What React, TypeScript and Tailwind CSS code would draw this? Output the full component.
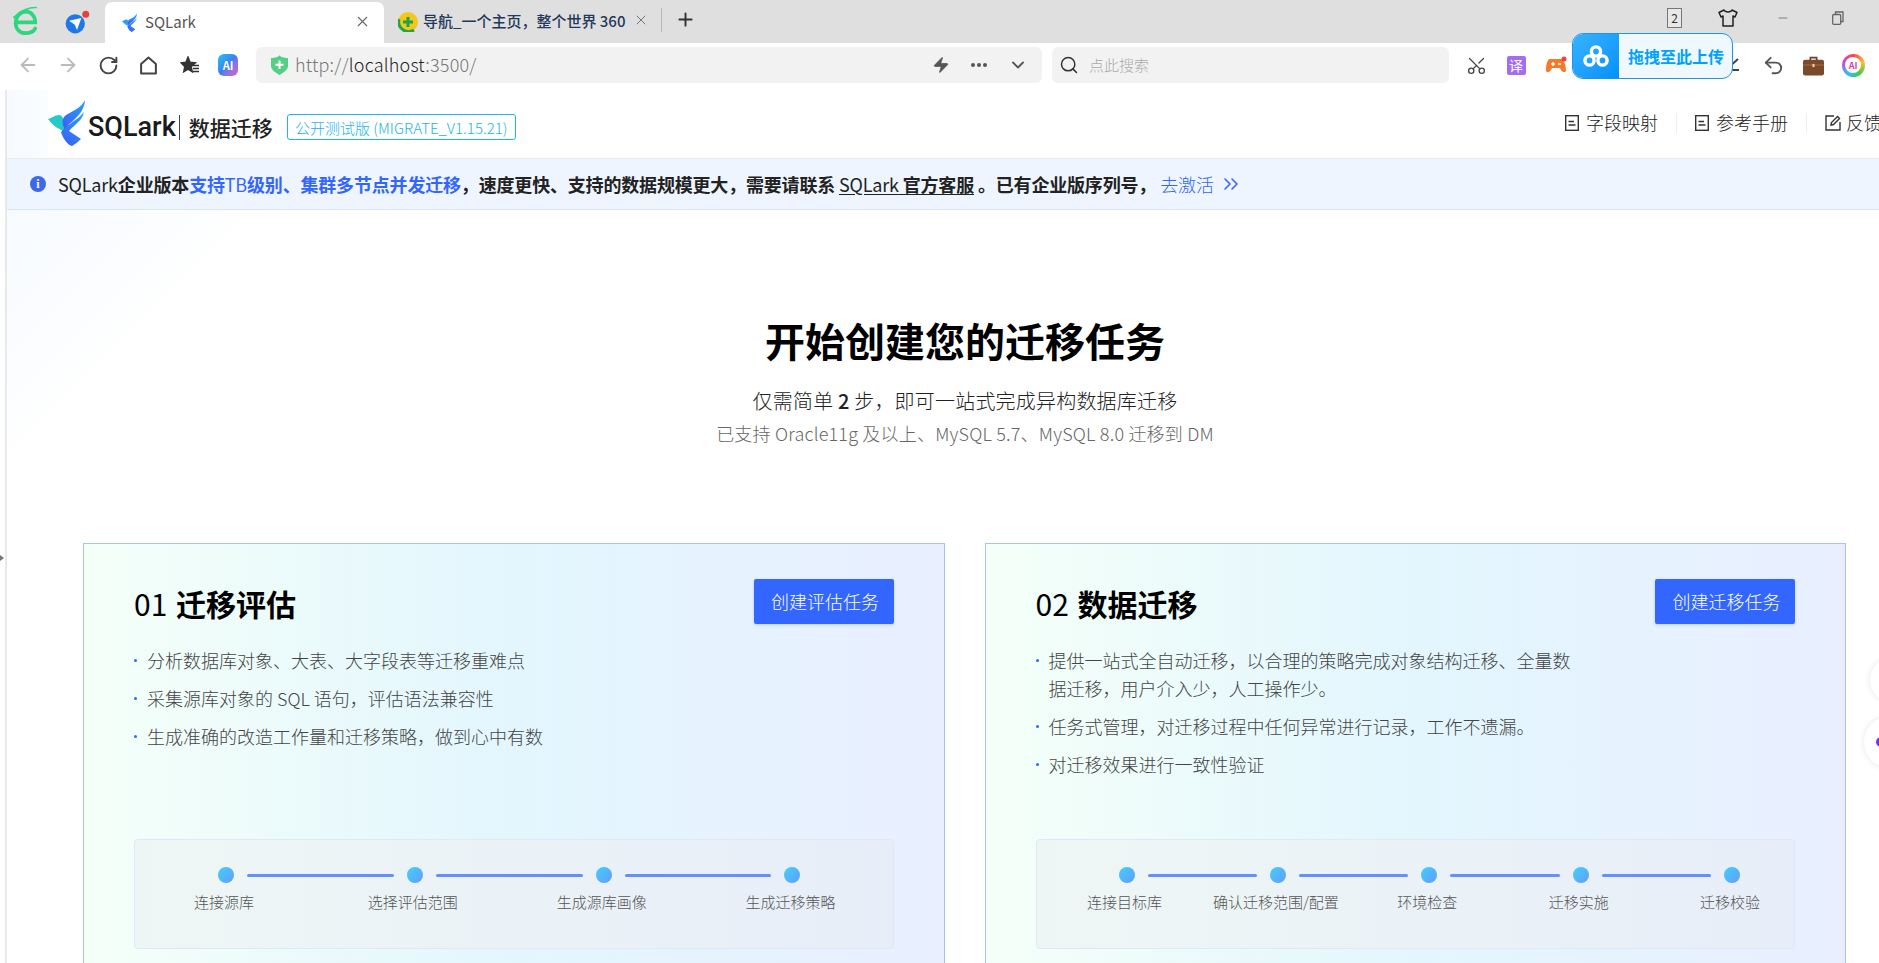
import React from "react";
import { ArrowLeft, ArrowRight, RotateCw, Scissors, Undo2, Search, ChevronDown, ChevronsRight, X, Plus, Minus, Zap } from "lucide-react";

function Bird({ className = "", teal = true }: { className?: string; teal?: boolean }) {
  const id = teal ? "birdA" : "birdB";
  return (
    <svg viewBox="0 0 37 47" className={className}>
      <defs>
        <linearGradient id={id} x1="0.8" y1="0" x2="0.3" y2="1">
          <stop offset="0" stopColor="#2a9dff" />
          <stop offset="1" stopColor="#3a63f5" />
        </linearGradient>
      </defs>
      <path d="M0 20 C4 19 7 16 11 16 C14 16 15 19 16 22 L18 33 C12 31 5 27 0 20 Z" fill={teal ? "#25c9c9" : "#2a9dff"} />
      <path d="M37 1 C37 11 28 20 21 25 L17 31 C14 25 13 20 18 16 C25 12 33 9 37 1 Z" fill={`url(#${id})`} />
      <path d="M36 13 C35 21 26 26 21 32 L33 40 C30 43 27 45 24 47 C20 46 15 40 13 33 C19 25 30 21 36 13 Z" fill={`url(#${id})`} />
    </svg>
  );
}

function DocIcon() {
  return (
    <svg viewBox="0 0 14 16" className="h-[16px] w-[14px] shrink-0" fill="none" stroke="#333" strokeWidth="1.4">
      <rect x="0.7" y="0.7" width="12.6" height="14.6" />
      <path d="M3.5 6.5H9M3.5 10H10.5" />
    </svg>
  );
}

function Tool({ children }: { children: React.ReactNode }) {
  return <div className="flex h-10 w-10 shrink-0 items-center justify-center">{children}</div>;
}

function TabBar() {
  return (
    <div className="flex h-[43px] items-end bg-[#dfdfdf]">
      <div className="flex h-[43px] w-[105px] shrink-0 items-center">
        <svg viewBox="0 0 30 34" className="ml-[11px] h-[32px] w-[28px]" fill="none" stroke="#2ed67f" strokeWidth="4" strokeLinecap="round">
          <path d="M5 17.5H26C26 10 21 6 16 6C9 6 5 12 5 18C5 25 10 29 16 29C20 29 24 27.5 26 24" />
          <path d="M3 12C10 5 20 1 27 1.5" strokeWidth="1.8" />
        </svg>
        <svg viewBox="0 0 32 32" className="ml-[24px] h-[28px] w-[28px]">
          <circle cx="14" cy="18" r="11" fill="#1f77e8" />
          <path d="M7 14.5L21 11.5L16 25L13.5 19Z" fill="#fff" />
          <circle cx="26" cy="7" r="4" fill="#e0453c" />
        </svg>
      </div>
      <div className="flex h-[41px] w-[279px] shrink-0 items-center rounded-t-[7px] bg-white">
        <Bird teal={false} className="ml-[17px] h-[19px] w-[15px]" />
        <span className="ml-[8px] text-[15px] text-[#555]">SQLark</span>
        <X className="ml-auto mr-[13px] mb-[3px] h-[17px] w-[17px] text-[#666]" strokeWidth={1.5} />
      </div>
      <div className="flex h-[43px] flex-1 items-center">
        <svg viewBox="0 0 20 20" className="ml-[14px] h-[20px] w-[20px] shrink-0">
          <circle cx="10" cy="10" r="10" fill="#f3c71c" />
          <path d="M1 7A10 10 0 0 0 16 18" stroke="#22a347" strokeWidth="3" fill="none" />
          <path d="M10 5V15M5 10H15" stroke="#1ea34a" strokeWidth="3" />
        </svg>
        <span className="ml-[5px] whitespace-nowrap text-[15px] font-medium text-[#23395b]">导航_一个主页，整个世界 360</span>
        <X className="ml-[8px] mb-[4px] h-[16px] w-[16px] text-[#777]" strokeWidth={1.5} />
        <div className="ml-[12px] mb-[4px] h-[24px] w-px bg-[#b8b8b8]" />
        <Plus className="ml-[13px] mb-[4px] h-[21px] w-[21px] text-[#333]" strokeWidth={2.2} />
        <div className="ml-auto flex items-center pb-[8px]">
          <div className="mr-[36px] flex h-[20px] w-[15px] items-center justify-center border border-[#777] bg-[#e8e8e8] text-[12px] leading-none text-[#333]">2</div>
          <svg viewBox="0 0 20 18" className="mr-[38px] h-[18px] w-[20px]" fill="none" stroke="#222" strokeWidth="1.5" strokeLinejoin="round">
            <path d="M6 1L1 3.5L3 8L5 7V17H15V7L17 8L19 3.5L14 1C13 3.5 7 3.5 6 1Z" />
          </svg>
          <Minus className="mr-[42px] h-[14px] w-[14px] text-[#666]" strokeWidth={1.3} />
          <svg viewBox="0 0 12 14" className="mr-[35px] h-[14px] w-[12px]" fill="none" stroke="#666" strokeWidth="1.3">
            <rect x="0.7" y="3.5" width="8" height="9.8" rx="1" />
            <path d="M3.5 3.5V1H11V10.5H8.7" />
          </svg>
        </div>
      </div>
    </div>
  );
}

function ToolBar() {
  return (
    <div className="flex h-[47px] items-center bg-white pb-[3px] pl-[8px] pr-[6px]">
      <Tool><ArrowLeft className="h-[22px] w-[22px] text-[#bbb]" strokeWidth={2} /></Tool>
      <Tool><ArrowRight className="h-[22px] w-[22px] text-[#bbb]" strokeWidth={2} /></Tool>
      <Tool><RotateCw className="ml-[1px] h-[21px] w-[21px] text-[#444]" strokeWidth={2.2} /></Tool>
      <Tool>
        <svg viewBox="0 0 18 18" className="h-[19px] w-[19px]" fill="none" stroke="#444" strokeWidth="1.9" strokeLinejoin="round">
          <path d="M2 7.5L9 1.5L16 7.5V16.5H2Z" />
        </svg>
      </Tool>
      <Tool>
        <svg viewBox="0 0 20 18" className="ml-[3px] h-[18px] w-[20px]" fill="none" stroke="#333" strokeWidth="1.8">
          <path d="M8 1.5L10 6.5L15 7L11 10.5L12 15.5L8 13L4 15.5L5 10.5L1.5 7L6 6.5Z" fill="#333" />
          <path d="M13 9.5H19M13 12.5H19M12.5 15.5H19" strokeWidth="1.5" />
        </svg>
      </Tool>
      <Tool>
        <div className="flex h-[22px] w-[20px] items-center justify-center rounded-[6px] bg-gradient-to-br from-[#12c6ee] via-[#3f7cf2] to-[#e44ec3] text-[11px] font-semibold leading-none text-white">AI</div>
      </Tool>
      <div className="ml-[8px] flex h-[36px] w-[786px] shrink-0 items-center rounded-[6px] bg-[#f2f2f2]">
        <svg viewBox="0 0 17 20" className="ml-[15px] h-[20px] w-[17px]">
          <path d="M0 3C4 3 8 2 8.5 0C9 2 13 3 17 3V11C17 15 12 18 8.5 20C5 18 0 15 0 11Z" fill="#55cf86" />
          <path d="M8.5 5.5V14M4.5 9.8H12.5" stroke="#fff" strokeWidth="2" />
        </svg>
        <span className="mb-[1px] ml-[7px] text-[18px] font-light tracking-[0.2px] text-[#777]">http://<span className="text-[#222]">localhost</span>:3500/</span>
        <Zap className="ml-auto h-[22px] w-[18px] fill-[#555] text-[#555]" strokeWidth={1} />
        <div className="ml-[21px] flex gap-[2px]">
          <i className="h-[4px] w-[4px] rounded-full bg-[#555]" />
          <i className="h-[4px] w-[4px] rounded-full bg-[#555]" />
          <i className="h-[4px] w-[4px] rounded-full bg-[#555]" />
        </div>
        <ChevronDown className="ml-[21px] mr-[14px] h-[20px] w-[20px] text-[#555]" strokeWidth={2.2} />
      </div>
      <div className="ml-[10px] flex h-[36px] w-[397px] shrink-0 items-center rounded-[6px] bg-[#f2f2f2]">
        <Search className="ml-[7px] h-[20px] w-[20px] text-[#333]" strokeWidth={1.8} />
        <span className="ml-[10px] text-[15px] font-light text-[#aaa]">点此搜索</span>
      </div>
      <div className="ml-[7px] flex flex-1 items-center">
        <Tool><Scissors className="h-[21px] w-[21px] -rotate-90 text-[#444]" strokeWidth={1.5} /></Tool>
        <Tool>
          <div className="flex h-[19px] w-[19px] items-center justify-center rounded-[2px] bg-[#a46cf5] text-[14px] leading-none text-white">译</div>
        </Tool>
        <Tool>
          <svg viewBox="0 0 22 18" className="h-[18px] w-[22px]">
            <path d="M5 3H16C19 3 21 10 21 14C21 17 18 17 16 14L15 12H7L6 14C4 17 1 17 1 14C1 10 2 3 5 3Z" fill="#f77a2c" />
            <path d="M6 8H10M8 6V10M13 8H16" stroke="#fff" strokeWidth="1.4" />
            <circle cx="19" cy="3" r="2.5" fill="#ef4040" />
          </svg>
        </Tool>
        <div className="ml-auto flex items-center">
          <Tool>
            <svg viewBox="0 0 18 18" className="h-[18px] w-[18px]" fill="none" stroke="#444" strokeWidth="2">
              <path d="M3 14H15M4 12L14 3" />
            </svg>
          </Tool>
          <Tool><Undo2 className="h-[23px] w-[23px] text-[#555]" strokeWidth={2} /></Tool>
          <Tool>
            <svg viewBox="0 0 20 20" className="h-[21px] w-[21px]">
              <path d="M7 5V2.5H13V5" fill="none" stroke="#6d4227" strokeWidth="1.6" />
              <rect x="0" y="4.5" width="20" height="15" rx="2" fill="#7b4a2c" />
              <rect x="0" y="9" width="20" height="1" fill="#a06a43" />
              <rect x="9" y="8.5" width="2" height="3" fill="#f4d38a" />
            </svg>
          </Tool>
          <Tool>
            <div className="flex h-[23px] w-[23px] items-center justify-center rounded-full bg-[conic-gradient(#f44,#fb3,#4c4,#3bf,#c4e,#f44)]">
              <div className="flex h-[16px] w-[16px] items-center justify-center rounded-full bg-white text-[9px] font-semibold leading-none text-[#d0479c]">AI</div>
            </div>
          </Tool>
        </div>
      </div>
    </div>
  );
}

function Header() {
  return (
    <div className="flex h-[68px] w-[1875px] shrink-0 items-center justify-between bg-[linear-gradient(90deg,#f6faff_0px,#fbfdff_41px,#ffffff_41px)] pb-[3px] pl-[41px]">
      <div className="flex items-center">
        <Bird className="h-[47px] w-[37px]" />
        <span className="ml-[3px] mt-[10px] font-['Roboto',sans-serif] text-[27px] font-medium leading-none text-[#1a1a1a]">SQLark</span>
        <div className="ml-[3px] mt-[9px] h-[25px] w-px bg-[#444]" />
        <span className="ml-[9px] mt-[10px] whitespace-nowrap text-[21px] font-medium leading-none text-[#222]">数据迁移</span>
        <div className="ml-[14px] mt-[9px] flex h-[26px] w-[229px] items-center justify-center whitespace-nowrap rounded-[3px] border border-[#1bb5ea] text-[15px] font-light leading-none text-[#1bb5ea]">公开测试版 (MIGRATE_V1.15.21)</div>
      </div>
      <div className="flex items-center">
        <DocIcon />
        <span className="ml-[7px] whitespace-nowrap text-[18px] font-light text-[#222]">字段映射</span>
        <div className="mx-[18px] h-[20px] w-px bg-[#eee]" />
        <DocIcon />
        <span className="ml-[7px] whitespace-nowrap text-[18px] font-light text-[#222]">参考手册</span>
        <div className="mx-[18px] h-[20px] w-px bg-[#eee]" />
        <svg viewBox="0 0 16 16" className="h-[16px] w-[16px] shrink-0" fill="none" stroke="#333" strokeWidth="1.4">
          <path d="M9 1H1V15H15V7" />
          <path d="M6 10L6.5 7.5L12.5 1.5L14.5 3.5L8.5 9.5Z" />
        </svg>
        <span className="ml-[5px] whitespace-nowrap text-[18px] font-light text-[#222]">反馈</span>
      </div>
    </div>
  );
}

function Banner() {
  return (
    <div className="flex h-[52px] shrink-0 items-center border-y border-b-[#d9e6fa] border-t-[#e9e9e9] bg-[#eef5fe] pl-[23px] text-[18px]">
      <div className="flex h-[16px] w-[16px] items-center justify-center rounded-full bg-[#3f67ea] font-['Liberation_Serif',serif] text-[12px] font-bold leading-none text-white">i</div>
      <span className="ml-[12px] whitespace-nowrap font-semibold tracking-[-0.18px] text-[#222]">
        <span className="font-normal">SQLark</span>企业版本<span className="text-[#3366ff]">支持<span className="font-normal">TB</span>级别、集群多节点并发迁移</span>，速度更快、支持的数据规模更大，需要请联系 <span className="underline underline-offset-2"><span className="font-normal">SQLark</span> 官方客服</span> 。已有企业版序列号，
      </span>
      <span className="ml-[4px] whitespace-nowrap font-light text-[#3366ff]">去激活</span>
      <ChevronsRight className="ml-[5px] h-[24px] w-[24px] text-[#3366ff]" strokeWidth={1.6} />
    </div>
  );
}

function Steps({ items, pad }: { items: string[]; pad: string }) {
  return (
    <div className={`h-[110px] rounded-[4px] border border-[#dfe8f6] bg-gradient-to-r from-[#eef6f5] to-[#e7eef9] pt-[27px] ${pad}`}>
      <div className="flex items-center">
        {items.map((t, i) => (
          <React.Fragment key={t}>
            <div className="h-[16px] w-[16px] shrink-0 rounded-full bg-gradient-to-br from-[#3fd0f8] to-[#5f9bfb]" />
            {i < items.length - 1 && <div className="mx-[13px] h-[3px] flex-1 rounded-full bg-[#648ffc]" />}
          </React.Fragment>
        ))}
      </div>
      <div className="mt-[8px] flex justify-between">
        {items.map((t) => (
          <div key={t} className="flex w-[16px] justify-center whitespace-nowrap text-[15px] font-light leading-[22px] text-[#555]">
            <span className="-translate-x-[2px]">{t}</span>
          </div>
        ))}
      </div>
    </div>
  );
}

function Card({ no, title, btn, list, steps, pad }: { no: string; title: string; btn: string; list: string[]; steps: string[]; pad: string }) {
  return (
    <div className="flex h-[500px] w-[861.5px] shrink-0 flex-col border border-[#a9c1fb] bg-gradient-to-r from-[#f4fff8] via-[#e3f6fe] to-[#e9efff] px-[50px] pt-[35px]">
      <div className="flex items-start justify-between">
        <div className="mt-[3px] text-[30px] leading-[42px] text-black">
          {no} <span className="ml-[2px] font-bold">{title}</span>
        </div>
        <div className="flex h-[45px] w-[140px] items-center justify-center rounded-[2px] bg-[#3366ff] pb-[1px] pl-[3px] text-[18px] font-light text-white shadow-[0_1px_3px_rgba(51,102,255,0.25)]">{btn}</div>
      </div>
      <ul className="mt-[22px] h-[193px] w-[541px]">
        {list.map((t) => (
          <li key={t} className="mb-[10px] flex text-[18px] font-light leading-[28px] text-[#444]">
            <span className="mr-[10px] mt-[13px] h-[3px] w-[3px] shrink-0 rounded-full bg-[#3366ff]" />
            <span>{t}</span>
          </li>
        ))}
      </ul>
      <Steps items={steps} pad={pad} />
    </div>
  );
}

export default function App() {
  return (
    <div className="relative h-[963px] w-[1879px] overflow-hidden bg-white font-['Noto_Sans_CJK_SC','Noto_Sans',sans-serif]">
      <TabBar />
      <ToolBar />
      <div className="flex">
        <div className="h-[873px] w-[7px] shrink-0 border-r-2 border-[#e9e9e9] pt-[465px]">
          <div className="h-0 w-0 border-y-[3px] border-l-[4px] border-y-transparent border-l-[#777]" />
        </div>
        <div className="flex min-w-0 flex-1 flex-col bg-[linear-gradient(135deg,#f3f8ff_0%,#ffffff_14%)]">
          <Header />
          <Banner />
          <div className="pl-[44px] pt-[102px] text-center">
            <h1 className="text-[40px] font-bold leading-[56px] text-black">开始创建您的迁移任务</h1>
            <p className="mt-[19px] text-[20px] font-light leading-[28px] tracking-[0.2px] text-[#222]">仅需简单 <span className="font-medium">2</span> 步，即可一站式完成异构数据库迁移</p>
            <p className="mt-[5px] text-[18px] font-light leading-[26px] tracking-[0.2px] text-[#666]">已支持 Oracle11g 及以上、MySQL 5.7、MySQL 8.0 迁移到 DM</p>
          </div>
          <div className="mt-[97px] flex gap-[40px] pl-[76px]">
            <Card
              no="01"
              title="迁移评估"
              btn="创建评估任务"
              list={["分析数据库对象、大表、大字段表等迁移重难点", "采集源库对象的 SQL 语句，评估语法兼容性", "生成准确的改造工作量和迁移策略，做到心中有数"]}
              steps={["连接源库", "选择评估范围", "生成源库画像", "生成迁移策略"]}
              pad="pl-[83px] pr-[92px]"
            />
            <Card
              no="02"
              title="数据迁移"
              btn="创建迁移任务"
              list={["提供一站式全自动迁移，以合理的策略完成对象结构迁移、全量数据迁移，用户介入少，人工操作少。", "任务式管理，对迁移过程中任何异常进行记录，工作不遗漏。", "对迁移效果进行一致性验证"]}
              steps={["连接目标库", "确认迁移范围/配置", "环境检查", "迁移实施", "迁移校验"]}
              pad="pl-[82px] pr-[54px]"
            />
          </div>
        </div>
      </div>
      <div className="absolute left-[1572px] top-[33px] flex h-[46px] w-[161px] items-center overflow-hidden rounded-[11px] border border-[#1c96e8] bg-[#eff8ff]">
        <div className="flex h-full w-[46px] items-center justify-center bg-gradient-to-br from-[#35b2ff] to-[#0091fb]">
          <svg viewBox="0 0 26 22" className="h-[22px] w-[26px]" fill="none" stroke="#fff" strokeWidth="3.4">
            <circle cx="13" cy="6.5" r="4.6" />
            <circle cx="6.5" cy="15.5" r="4.6" />
            <circle cx="19.5" cy="15.5" r="4.6" />
          </svg>
        </div>
        <span className="ml-[9px] text-[16px] font-bold leading-none text-[#00a2ff]">拖拽至此上传</span>
      </div>
      <div className="absolute left-[1870px] top-[657px] h-[46px] w-[46px] rounded-full bg-white shadow-[0_0_6px_rgba(0,0,0,0.1)]" />
      <div className="absolute left-[1864px] top-[716px] flex h-[52px] w-[52px] items-center rounded-full bg-white pl-[12px] shadow-[0_0_6px_rgba(0,0,0,0.1)]">
        <div className="h-[10px] w-[10px] rounded-full bg-[#7a2ff0]" />
      </div>
    </div>
  );
}
